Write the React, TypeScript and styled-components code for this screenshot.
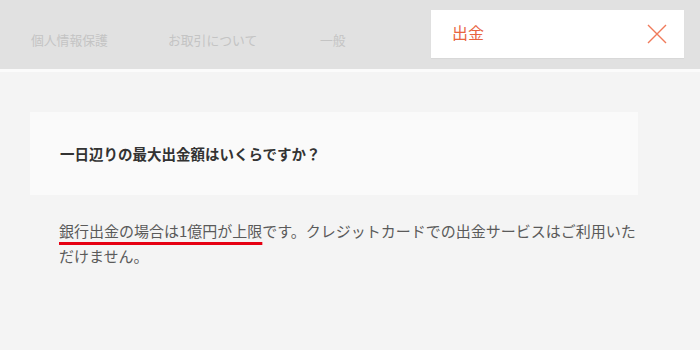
import React from 'react';
import styled, { createGlobalStyle } from 'styled-components';

const GlobalStyle = createGlobalStyle`
  html, body {
    margin: 0;
    padding: 0;
    background: #f4f4f4;
    font-family: "Noto Sans CJK JP", "Noto Sans", sans-serif;
  }
`;

const Page = styled.div`
  width: 700px;
  height: 350px;
  overflow: hidden;
  background: #f4f4f4;
`;

const Header = styled.header`
  height: 69px;
  background: #e1e1e1;
  border-bottom: 3px solid #fbfbfb;
  display: flex;
  align-items: flex-start;
`;

const TabList = styled.nav`
  flex: 1;
  display: flex;
  align-items: center;
  height: 69px;
  padding-left: 31px;
  padding-top: 9px;
  box-sizing: border-box;
`;

const Tab = styled.span<{ $width: number }>`
  width: ${p => p.$width}px;
  font-size: 12.8px;
  color: #c4c4c4;
  white-space: nowrap;
`;

const ActiveTab = styled.div`
  margin-top: 10px;
  margin-right: 16px;
  width: 253px;
  height: 48px;
  background: #ffffff;
  box-shadow: 0 1px 1px rgba(0, 0, 0, 0.04);
  display: flex;
  align-items: center;
  justify-content: space-between;
  padding: 0 16px 0 21px;
  box-sizing: border-box;
`;

const ActiveLabel = styled.span`
  font-size: 16px;
  color: #e8653f;
  margin-top: -4px;
`;

const CloseButton = styled.button`
  border: none;
  background: none;
  padding: 0;
  width: 22px;
  height: 22px;
  display: flex;
  align-items: center;
  justify-content: center;
  cursor: pointer;
`;

const Content = styled.main`
  padding: 40px 62px 0 30px;
`;

const QuestionCard = styled.div`
  background: #fafafa;
  height: 83px;
  display: flex;
  align-items: center;
  padding-left: 30px;
  box-sizing: border-box;
`;

const Question = styled.h3`
  margin: 0;
  font-size: 14.5px;
  font-weight: 700;
  color: #333333;
`;

const Answer = styled.p`
  margin: 23px -10px 0 29px;
  font-size: 15px;
  line-height: 25px;
  color: #5a5a5a;
`;

const Highlight = styled.span`
  text-decoration: underline;
  text-decoration-color: #e60012;
  text-decoration-thickness: 2.5px;
  text-underline-offset: 5px;
`;

export default function App() {
  return (
    <Page>
      <GlobalStyle />
      <Header>
        <TabList>
          <Tab $width={137}>個人情報保護</Tab>
          <Tab $width={152}>お取引について</Tab>
          <Tab $width={60}>一般</Tab>
        </TabList>
        <ActiveTab>
          <ActiveLabel>出金</ActiveLabel>
          <CloseButton aria-label="閉じる">
            <svg width="20" height="20" viewBox="0 0 20 20">
              <path d="M1 1 L19 19 M19 1 L1 19" stroke="#f07a5a" strokeWidth="1.4" fill="none" />
            </svg>
          </CloseButton>
        </ActiveTab>
      </Header>
      <Content>
        <QuestionCard>
          <Question>一日辺りの最大出金額はいくらですか？</Question>
        </QuestionCard>
        <Answer>
          <Highlight>銀行出金の場合は1億円が上限</Highlight>です。クレジットカードでの出金サービスはご利用いただけません。
        </Answer>
      </Content>
    </Page>
  );
}
